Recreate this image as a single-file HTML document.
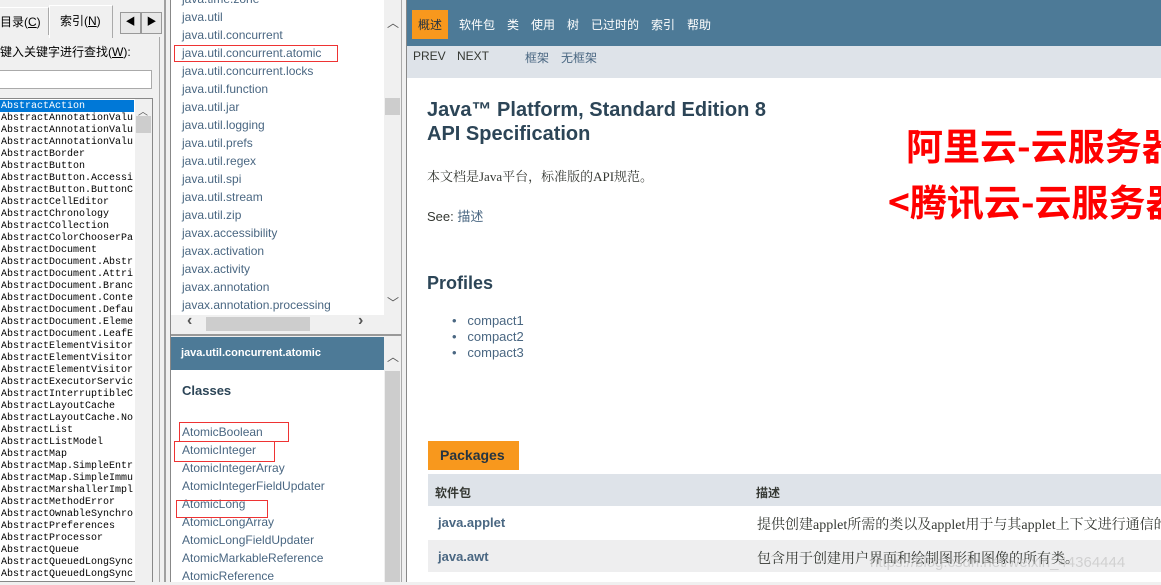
<!DOCTYPE html>
<html><head><meta charset="utf-8"><style>
*{margin:0;padding:0;box-sizing:border-box}
body{width:1161px;height:582px;overflow:hidden;position:relative;background:#f0f0f0;font-family:"Liberation Sans","Noto Sans CJK SC",sans-serif}
.a{position:absolute;white-space:nowrap}
.mono{font-family:"Liberation Mono","Noto Sans CJK SC",monospace;font-size:10px;line-height:12px;color:#000}
.lnk{color:#4a6782;font-size:12px}
.rb{position:absolute;border:1px solid #e33}
</style></head><body>
<!-- left pane -->
<div class="a" style="left:0;top:7px;width:49px;height:28px;border-top:1px solid #fff;border-right:1px solid #aaa;background:#f0f0f0"></div>
<div class="a" style="left:0;top:13px;font-size:12px">目录(<u>C</u>)</div>
<div class="a" style="left:49px;top:5px;width:64px;height:33px;border:1px solid #fff;border-right-color:#aaa;border-bottom:none;background:#f0f0f0"></div>
<div class="a" style="left:60px;top:12px;font-size:12px">索引(<u>N</u>)</div>
<div class="a" style="left:120px;top:12px;width:21px;height:22px;border:1px solid #999;background:#e8e8e8;font-size:10px;text-align:center;line-height:20px">◀</div>
<div class="a" style="left:141px;top:12px;width:21px;height:22px;border:1px solid #999;background:#e8e8e8;font-size:10px;text-align:center;line-height:20px">▶</div>
<div class="a" style="left:0;top:37px;width:160px;height:545px;border-right:1px solid #aaa"></div>
<div class="a" style="left:0;top:43px;font-size:12px">键入关键字进行查找(<u>W</u>):</div>
<div class="a" style="left:0;top:70px;width:152px;height:19px;background:#fff;border:1px solid #aaa;border-left:none"></div>
<div class="a" style="left:0;top:98px;width:153px;height:484px;background:#fff;border:1px solid #888;border-left:none"></div>
<div class="a" style="left:135px;top:99px;width:17px;height:483px;background:#f0f0f0"></div>
<div class="a" style="left:138px;top:103px;font-size:10px;color:#555">︿</div>
<div class="a" style="left:136px;top:116px;width:15px;height:17px;background:#cdcdcd"></div>
<div class="a" style="left:0;top:100px;width:134px;height:12px;background:#0078d7"></div>
<div class="a mono" style="left:1px;top:101px;width:133px;overflow:hidden"><span style="color:#fff">AbstractAction</span><br>AbstractAnnotationValu<br>AbstractAnnotationValu<br>AbstractAnnotationValu<br>AbstractBorder<br>AbstractButton<br>AbstractButton.Accessi<br>AbstractButton.ButtonC<br>AbstractCellEditor<br>AbstractChronology<br>AbstractCollection<br>AbstractColorChooserPa<br>AbstractDocument<br>AbstractDocument.Abstr<br>AbstractDocument.Attri<br>AbstractDocument.Branc<br>AbstractDocument.Conte<br>AbstractDocument.Defau<br>AbstractDocument.Eleme<br>AbstractDocument.LeafE<br>AbstractElementVisitor<br>AbstractElementVisitor<br>AbstractElementVisitor<br>AbstractExecutorServic<br>AbstractInterruptibleC<br>AbstractLayoutCache<br>AbstractLayoutCache.No<br>AbstractList<br>AbstractListModel<br>AbstractMap<br>AbstractMap.SimpleEntr<br>AbstractMap.SimpleImmu<br>AbstractMarshallerImpl<br>AbstractMethodError<br>AbstractOwnableSynchro<br>AbstractPreferences<br>AbstractProcessor<br>AbstractQueue<br>AbstractQueuedLongSync<br>AbstractQueuedLongSync</div>
<div class="a" style="left:164px;top:0;width:2px;height:582px;background:#a0a0a0"></div>
<!-- middle -->
<div class="a" style="left:170px;top:0;width:1px;height:582px;background:#888"></div>
<div class="a" style="left:171px;top:0;width:213px;height:315px;background:#fff"></div>
<div class="a" style="left:384px;top:0;width:17px;height:315px;background:#f0f0f0"></div>
<div class="a" style="left:387px;top:14px;font-size:12px;color:#555">︿</div>
<div class="a" style="left:385px;top:98px;width:15px;height:17px;background:#cdcdcd"></div>
<div class="a" style="left:387px;top:294px;font-size:12px;color:#555">﹀</div>
<div class="a lnk" style="left:182px;top:-10px;line-height:18px">java.time.zone<br>java.util<br>java.util.concurrent<br>java.util.concurrent.atomic<br>java.util.concurrent.locks<br>java.util.function<br>java.util.jar<br>java.util.logging<br>java.util.prefs<br>java.util.regex<br>java.util.spi<br>java.util.stream<br>java.util.zip<br>javax.accessibility<br>javax.activation<br>javax.activity<br>javax.annotation<br>javax.annotation.processing</div>
<div class="rb" style="left:174px;top:45px;width:164px;height:17px"></div>
<div class="a" style="left:171px;top:315px;width:230px;height:18px;background:#f0f0f0"></div>
<div class="a" style="left:206px;top:317px;width:104px;height:14px;background:#cdcdcd"></div>
<div class="a" style="left:187px;top:312px;font-size:16px;color:#555;font-weight:bold">‹</div>
<div class="a" style="left:358px;top:312px;font-size:16px;color:#555;font-weight:bold">›</div>
<div class="a" style="left:171px;top:334px;width:230px;height:2px;background:#999"></div>
<div class="a" style="left:171px;top:337px;width:213px;height:245px;background:#fff"></div>
<div class="a" style="left:171px;top:337px;width:213px;height:33px;background:#4d7a97"></div>
<div class="a" style="left:181px;top:347px;font-size:11px;font-weight:bold;color:#fff">java.util.concurrent.atomic</div>
<div class="a" style="left:384px;top:337px;width:17px;height:245px;background:#f0f0f0"></div>
<div class="a" style="left:387px;top:348px;font-size:12px;color:#555">︿</div>
<div class="a" style="left:385px;top:371px;width:15px;height:211px;background:#cdcdcd"></div>
<div class="a" style="left:182px;top:383px;font-size:13px;font-weight:bold;color:#2c4557">Classes</div>
<div class="a lnk" style="left:182px;top:423px;line-height:18px">AtomicBoolean<br>AtomicInteger<br>AtomicIntegerArray<br>AtomicIntegerFieldUpdater<br>AtomicLong<br>AtomicLongArray<br>AtomicLongFieldUpdater<br>AtomicMarkableReference<br>AtomicReference</div>
<div class="rb" style="left:179px;top:422px;width:110px;height:20px"></div>
<div class="rb" style="left:174px;top:441px;width:101px;height:21px"></div>
<div class="rb" style="left:176px;top:500px;width:92px;height:18px"></div>
<!-- right -->
<div class="a" style="left:401px;top:0;width:6px;height:582px;background:#f0f0f0;border-left:1px solid #aaa;border-right:1px solid #888"></div>
<div class="a" style="left:407px;top:0;width:754px;height:582px;background:#fff"></div>
<div class="a" style="left:407px;top:0;width:754px;height:46px;background:#4d7a97"></div>
<div class="a" style="left:412px;top:10px;width:36px;height:29px;background:#f8981d"></div>
<div class="a" style="left:418px;top:16px;font-size:12px;color:#253441">概述</div>
<div class="a" style="left:459px;top:16px;font-size:12px;color:#fff">软件包</div>
<div class="a" style="left:507px;top:16px;font-size:12px;color:#fff">类</div>
<div class="a" style="left:531px;top:16px;font-size:12px;color:#fff">使用</div>
<div class="a" style="left:567px;top:16px;font-size:12px;color:#fff">树</div>
<div class="a" style="left:591px;top:16px;font-size:12px;color:#fff">已过时的</div>
<div class="a" style="left:651px;top:16px;font-size:12px;color:#fff">索引</div>
<div class="a" style="left:687px;top:16px;font-size:12px;color:#fff">帮助</div>
<div class="a" style="left:407px;top:46px;width:754px;height:32px;background:#dee3e9"></div>
<div class="a" style="left:413px;top:49px;font-size:12px;color:#353833">PREV</div>
<div class="a" style="left:457px;top:49px;font-size:12px;color:#353833">NEXT</div>
<div class="a" style="left:525px;top:49px;font-size:12px;color:#4a6782">框架</div>
<div class="a" style="left:561px;top:49px;font-size:12px;color:#4a6782">无框架</div>
<div class="a" style="left:427px;top:98px;font-size:20px;font-weight:bold;color:#2c4557;line-height:24px">Java™ Platform, Standard Edition 8<br>API Specification</div>
<div class="a" style="left:427px;top:166px;font-size:13px;color:#353833;font-family:'Liberation Serif','Noto Serif CJK SC',serif">本文档是Java平台，标准版的API规范。</div>
<div class="a" style="left:427px;top:206px;font-size:13px;color:#353833">See: <span style="color:#4a6782">描述</span></div>
<div class="a" style="left:427px;top:273px;font-size:18px;font-weight:bold;color:#2c4557">Profiles</div>
<div class="a" style="left:452px;top:313px;font-size:13px;color:#4a6782;line-height:16px">•&nbsp;&nbsp;&nbsp;compact1<br>•&nbsp;&nbsp;&nbsp;compact2<br>•&nbsp;&nbsp;&nbsp;compact3</div>
<div class="a" style="left:906px;top:122px;font-size:37px;font-weight:bold;color:#f00;font-family:'Noto Sans CJK SC',sans-serif;line-height:44px">阿里云-云服务器</div>
<div class="a" style="left:888px;top:178px;font-size:37px;font-weight:bold;color:#f00;font-family:'Noto Sans CJK SC',sans-serif;line-height:44px">&lt;腾讯云-云服务器</div>
<div class="a" style="left:428px;top:441px;width:91px;height:29px;background:#f8981d"></div>
<div class="a" style="left:440px;top:447px;font-size:14px;font-weight:bold;color:#253441">Packages</div>
<div class="a" style="left:428px;top:474px;width:733px;height:32px;background:#dee3e9"></div>
<div class="a" style="left:435px;top:484px;font-size:12px;font-weight:bold;color:#353833">软件包</div>
<div class="a" style="left:756px;top:484px;font-size:12px;font-weight:bold;color:#353833">描述</div>
<div class="a" style="left:438px;top:515px;font-size:13px;font-weight:bold;color:#4a6782">java.applet</div>
<div class="a" style="left:757px;top:514px;font-size:14px;color:#353833;font-family:'Liberation Serif','Noto Serif CJK SC',serif">提供创建applet所需的类以及applet用于与其applet上下文进行通信的类</div>
<div class="a" style="left:428px;top:540px;width:733px;height:32px;background:#eeeeef"></div>
<div class="a" style="left:438px;top:549px;font-size:13px;font-weight:bold;color:#4a6782">java.awt</div>
<div class="a" style="left:757px;top:548px;font-size:14px;color:#353833;font-family:'Liberation Serif','Noto Serif CJK SC',serif">包含用于创建用户界面和绘制图形和图像的所有类。</div>
<div class="a" style="left:870px;top:554px;font-size:15px;color:rgba(180,180,180,0.5)">https://blog.csdn.net/weixin_44364444</div>
</body></html>
